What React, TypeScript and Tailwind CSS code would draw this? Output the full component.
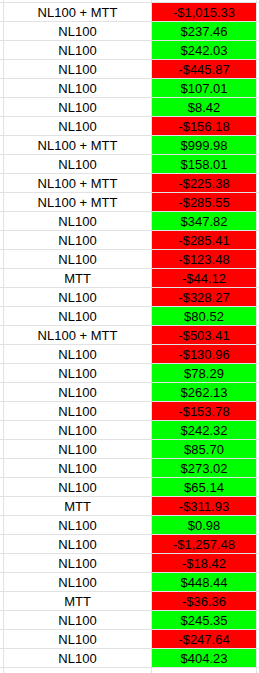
import { Fragment } from "react";

// Two-column sheet excerpt: game type + session result, filled red/green by sign.
const rows: [string, string][] = [
  ["NL100 + MTT", "-$1,015.33"],
  ["NL100", "$237.46"],
  ["NL100", "$242.03"],
  ["NL100", "-$445.87"],
  ["NL100", "$107.01"],
  ["NL100", "$8.42"],
  ["NL100", "-$156.18"],
  ["NL100 + MTT", "$999.98"],
  ["NL100", "$158.01"],
  ["NL100 + MTT", "-$225.38"],
  ["NL100 + MTT", "-$285.55"],
  ["NL100", "$347.82"],
  ["NL100", "-$285.41"],
  ["NL100", "-$123.48"],
  ["MTT", "-$44.12"],
  ["NL100", "-$328.27"],
  ["NL100", "$80.52"],
  ["NL100 + MTT", "-$503.41"],
  ["NL100", "-$130.96"],
  ["NL100", "$78.29"],
  ["NL100", "$262.13"],
  ["NL100", "-$153.78"],
  ["NL100", "$242.32"],
  ["NL100", "$85.70"],
  ["NL100", "$273.02"],
  ["NL100", "$65.14"],
  ["MTT", "-$311.93"],
  ["NL100", "$0.98"],
  ["NL100", "-$1,257.48"],
  ["NL100", "-$18.42"],
  ["NL100", "$448.44"],
  ["MTT", "-$36.36"],
  ["NL100", "$245.35"],
  ["NL100", "-$247.64"],
  ["NL100", "$404.23"],
];

export default function App() {
  return (
    <div className="h-[673px] w-[259px] overflow-hidden bg-white">
      <div
        className="grid h-[673px] grid-cols-[3px_147px_104px_2px] gap-px bg-[#e2e2e2] text-[13px] leading-[18px] text-black"
        style={{ gridTemplateRows: `2px repeat(${rows.length}, 18px) 1fr`, fontFamily: '"Liberation Sans", Arial, sans-serif' }}
      >
        <Edge />
        {rows.map(([kind, amount], i) => {
          const loss = amount.startsWith("-");
          return (
            <Fragment key={i}>
              <div className="bg-white" />
              <div className="bg-white pt-px text-center">{kind}</div>
              <div className={loss ? "bg-[#ff0000] pt-px text-center" : "bg-[#00ff00] pt-px text-center"}>{amount}</div>
              <div className="bg-white" />
            </Fragment>
          );
        })}
        <Edge />
      </div>
    </div>
  );
}

function Edge() {
  return (
    <>
      <div className="bg-white" />
      <div className="bg-white" />
      <div className="bg-white" />
      <div className="bg-white" />
    </>
  );
}
